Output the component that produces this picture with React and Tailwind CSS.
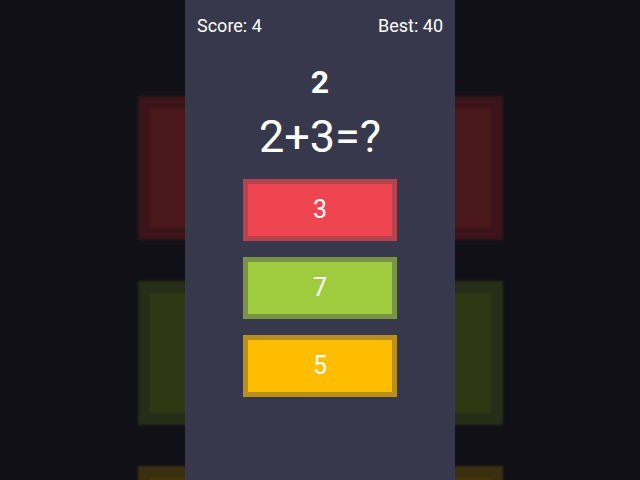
import React from 'react';

const answers = [
    { value: 3, fill: 'bg-[#ef4550]', edge: 'border-[#b4434f]' },
    { value: 7, fill: 'bg-[#9fcb3f]', edge: 'border-[#789346]' },
    { value: 5, fill: 'bg-[#ffbd00]', edge: 'border-[#b8901f]' },
];

const shadows = [
    { outer: 'bg-[#3a1418]', inner: 'bg-[#4a171b]' },
    { outer: 'bg-[#262d18]', inner: 'bg-[#2e3914]' },
    { outer: 'bg-[#3a2f0f]', inner: 'bg-[#463708]' },
];

const App = () => {
    return (
        <div className="w-[640px] h-[480px] grid overflow-hidden bg-[#111017] font-['Roboto',sans-serif]">
            {/* dimmed, enlarged copy of the buttons behind the panel */}
            <div className="col-start-1 row-start-1 flex flex-col items-center pt-[96px] gap-[41px] blur-[1px]">
                {shadows.map((s, i) => (
                    <div key={i} className={`w-[365px] h-[144px] shrink-0 p-[12px] ${s.outer}`}>
                        <div className={`w-full h-full ${s.inner}`} />
                    </div>
                ))}
            </div>

            <div className="relative z-10 col-start-1 row-start-1 w-[270px] h-full mx-auto bg-[#38384c] flex flex-col items-center text-white">
                <div className="w-full h-[50px] px-3 flex items-center justify-between text-[18px]">
                    <span>Score: 4</span>
                    <span>Best: 40</span>
                </div>

                <div className="mt-[16px] text-[32px] leading-[32px] font-bold">2</div>
                <div className="mt-[16px] text-[45px] leading-[45px]">2+3=?</div>

                <div className="mt-[20px] flex flex-col gap-[16px]">
                    {answers.map((a) => (
                        <button
                            key={a.value}
                            className={`w-[154px] h-[62px] border-[5px] flex items-center justify-center text-[25px] text-white ${a.fill} ${a.edge}`}
                        >
                            {a.value}
                        </button>
                    ))}
                </div>
            </div>
        </div>
    );
};

export default App;
